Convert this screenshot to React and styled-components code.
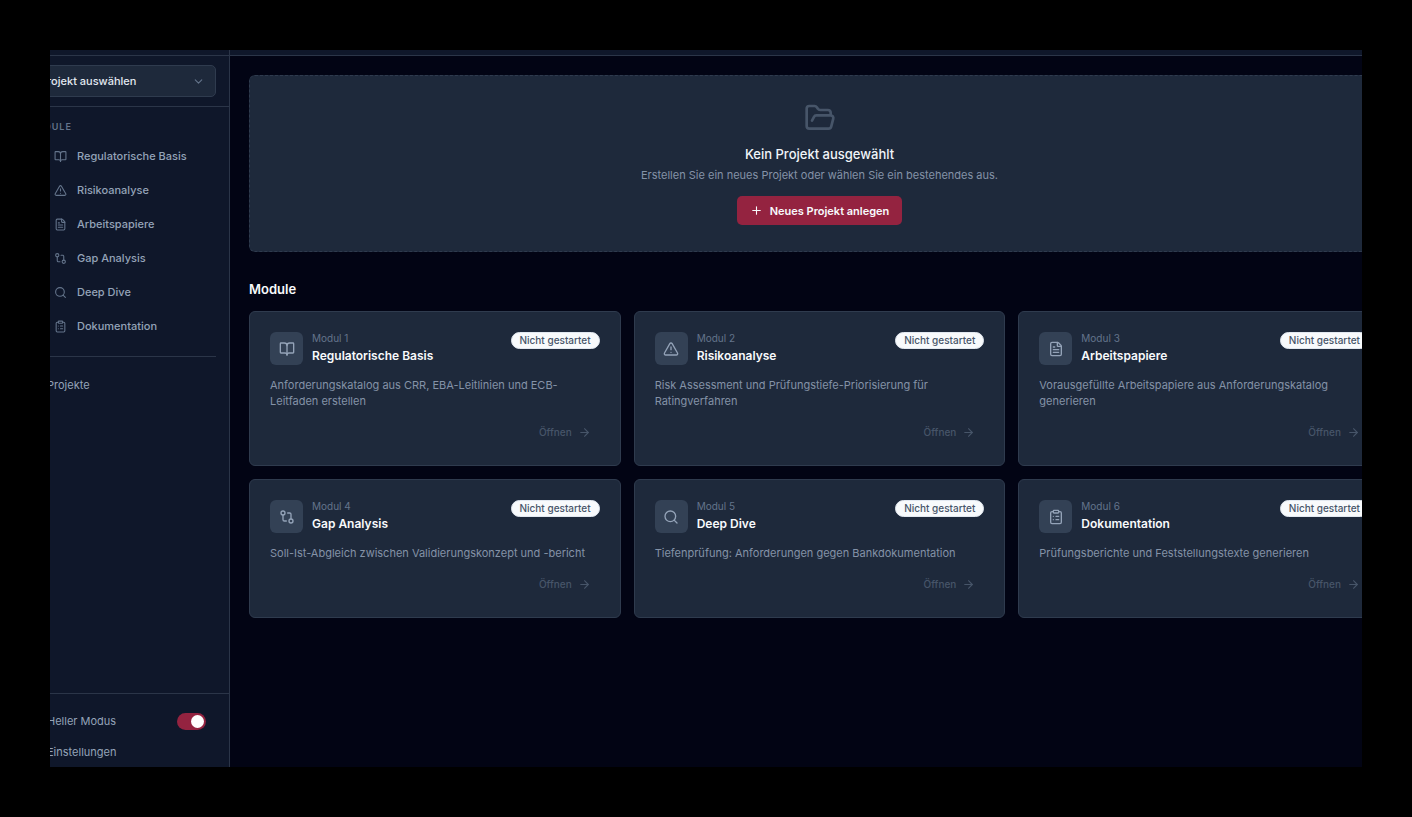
import React, { useState } from 'react';
import styled, { createGlobalStyle } from 'styled-components';
import {
  ArrowRight,
  BookOpen,
  ChevronDown,
  ClipboardList,
  FileText,
  FolderOpen,
  GitCompare,
  Plus,
  Search,
  Settings,
  Sun,
  Folder,
  TriangleAlert,
} from 'lucide-react';

const GlobalStyle = createGlobalStyle`
  * {
    box-sizing: border-box;
  }

  body {
    margin: 0;
    background: #000;
    color: #f8fafc;
    font-family: Inter, "Liberation Sans", sans-serif;
    font-size: 11px;
    line-height: 16px;
  }

  h1, h2, h3, p, ul {
    margin: 0;
    padding: 0;
  }

  button, select {
    font: inherit;
  }
`;

const Stage = styled.div`
  height: 100vh;
  padding: 50px;
`;

const Viewport = styled.div`
  height: 100%;
  overflow: hidden;
  background: #020414;
`;

const Shell = styled.div`
  display: flex;
  height: 100%;
  margin: 0 -48px 0 -36px;
`;

const Sidebar = styled.aside`
  display: flex;
  flex-direction: column;
  flex: none;
  width: 216px;
  background: #0f172a;
  border-right: 1px solid #2b3548;
`;

const TopStrip = styled.div`
  flex: none;
  height: 6px;
  background: #0f172a;
  border-bottom: 1px solid #2b3548;
`;

const Picker = styled.div`
  display: grid;
  align-items: center;
  padding: 9px 13px;
  border-bottom: 1px solid #2b3548;

  > * {
    grid-area: 1 / 1;
  }

  svg {
    justify-self: end;
    margin-right: 11px;
    color: #64748b;
    pointer-events: none;
  }
`;

const ProjectSelect = styled.select`
  appearance: none;
  width: 100%;
  height: 32px;
  padding: 0 12px;
  border: 1px solid #2f3b4e;
  border-radius: 5px;
  background: #1e293b;
  color: #e2e8f0;
  font-size: 11px;
  font-weight: 500;
`;

const Nav = styled.nav`
  flex: 1;
  padding: 12px 13px;
`;

const NavHeading = styled.h2`
  padding: 0 0 4px;
  color: #64748b;
  font-size: 9px;
  font-weight: 600;
  letter-spacing: 1px;
  text-transform: uppercase;
`;

const NavList = styled.ul`
  list-style: none;
`;

const NavLink = styled.a`
  display: flex;
  align-items: center;
  gap: 10px;
  height: 34px;
  padding-left: 27px;
  color: #94a3b8;
  font-weight: 500;
  text-decoration: none;

  svg {
    color: #64748b;
  }
`;

const Divider = styled.hr`
  height: 1px;
  margin: 13px 0;
  border: 0;
  background: #2b3548;
`;

const SideFooter = styled.div`
  display: grid;
  gap: 1px;
  padding: 12px 13px 0;
  border-top: 1px solid #2b3548;
`;

const FooterRow = styled.div`
  display: flex;
  align-items: center;
  gap: 7px;
  height: 30px;
  padding-right: 10px;
  color: #94a3b8;

  label {
    flex: 1;
  }
`;

const FooterLink = styled.a`
  display: flex;
  align-items: center;
  gap: 7px;
  color: inherit;
  text-decoration: none;
`;

const Switch = styled.input`
  appearance: none;
  display: flex;
  align-items: center;
  width: 29px;
  height: 17px;
  margin: 0;
  padding: 2px;
  border-radius: 9px;
  background: ${props => (props.checked ? '#942340' : '#334155')};

  &::before {
    content: '';
    width: 13px;
    height: 13px;
    margin-left: ${props => (props.checked ? 'auto' : 0)};
    border-radius: 50%;
    background: #fff;
  }
`;

const Main = styled.div`
  flex: 1;
  min-width: 0;
`;

const Content = styled.main`
  padding: 19px 20px 19px 19px;
`;

const Empty = styled.section`
  display: flex;
  flex-direction: column;
  align-items: center;
  padding: 26px 20px;
  border: 1px dashed #2f3b4e;
  border-radius: 6px;
  background: #1e293b;
  text-align: center;

  > svg {
    color: #475569;
  }
`;

const EmptyTitle = styled.h1`
  margin-top: 10px;
  color: #f1f5f9;
  font-size: 13px;
  font-weight: 500;
  line-height: 20px;
`;

const EmptyText = styled.p`
  margin: 3px 0 13px;
  color: #8492a7;
`;

const Primary = styled.button`
  display: flex;
  align-items: center;
  gap: 7px;
  height: 29px;
  padding: 0 13px;
  border: 0;
  border-radius: 5px;
  background: #942340;
  color: #f8fafc;
  font-weight: 600;
`;

const SectionTitle = styled.h2`
  margin: 27px 0 12px;
  font-size: 13px;
  font-weight: 600;
  line-height: 20px;
`;

const Grid = styled.div`
  display: grid;
  grid-template-columns: repeat(3, 1fr);
  gap: 13px;
`;

const Card = styled.article`
  padding: 20px;
  border: 1px solid #2f3b4e;
  border-radius: 6px;
  background: #1e293b;
`;

const CardHead = styled.div`
  display: flex;
  align-items: flex-start;
  gap: 9px;
  height: 33px;
`;

const IconBox = styled.div`
  display: grid;
  place-items: center;
  width: 33px;
  height: 33px;
  border-radius: 6px;
  background: #334155;
  color: #94a3b8;
`;

const CardNames = styled.div`
  flex: 1;
`;

const CardNumber = styled.p`
  color: #64748b;
  font-size: 10px;
  line-height: 13px;
`;

const CardTitle = styled.h3`
  font-size: 12px;
  font-weight: 600;
  line-height: 22px;
`;

const Badge = styled.span`
  padding: 0 8px;
  border: 1px solid #e2e8f0;
  border-radius: 9px;
  background: #f8fafc;
  color: #475569;
  font-size: 10px;
  font-weight: 500;
  line-height: 15px;
`;

const CardText = styled.p`
  margin: 12px 0 10px;
  color: #8492a7;
`;

const OpenButton = styled.button`
  display: flex;
  align-items: center;
  gap: 6px;
  height: 26px;
  margin-left: auto;
  padding: 0 9px;
  border: 0;
  background: none;
  color: #475569;
  font-size: 10px;
  font-weight: 500;
`;

const modules = [
  {
    title: 'Regulatorische Basis',
    text: 'Anforderungskatalog aus CRR, EBA-Leitlinien und ECB-Leitfaden erstellen',
    icon: BookOpen,
  },
  {
    title: 'Risikoanalyse',
    text: 'Risk Assessment und Prüfungstiefe-Priorisierung für Ratingverfahren',
    icon: TriangleAlert,
  },
  {
    title: 'Arbeitspapiere',
    text: 'Vorausgefüllte Arbeitspapiere aus Anforderungskatalog generieren',
    icon: FileText,
  },
  {
    title: 'Gap Analysis',
    text: 'Soll-Ist-Abgleich zwischen Validierungskonzept und -bericht',
    icon: GitCompare,
  },
  {
    title: 'Deep Dive',
    text: 'Tiefenprüfung: Anforderungen gegen Bankdokumentation',
    icon: Search,
  },
  {
    title: 'Dokumentation',
    text: 'Prüfungsberichte und Feststellungstexte generieren',
    icon: ClipboardList,
  },
];

const ModuleCard = ({ number, title, text, icon: Icon }) => (
  <Card>
    <CardHead>
      <IconBox><Icon size={16} /></IconBox>
      <CardNames>
        <CardNumber>Modul {number}</CardNumber>
        <CardTitle>{title}</CardTitle>
      </CardNames>
      <Badge>Nicht gestartet</Badge>
    </CardHead>
    <CardText>{text}</CardText>
    <OpenButton type="button" disabled>
      Öffnen
      <ArrowRight size={13} />
    </OpenButton>
  </Card>
);

export default function App() {
  const [light, setLight] = useState(true);

  return (
    <Stage>
      <GlobalStyle />
      <Viewport>
        <Shell>
          <Sidebar>
            <TopStrip />
            <Picker>
              <ProjectSelect aria-label="Projekt auswählen">
                <option>Projekt auswählen</option>
              </ProjectSelect>
              <ChevronDown size={13} />
            </Picker>
            <Nav>
              <NavHeading>Module</NavHeading>
              <NavList>
                {modules.map(({ title, icon: Icon }) => (
                  <li key={title}>
                    <NavLink href="#">
                      <Icon size={13} />
                      {title}
                    </NavLink>
                  </li>
                ))}
              </NavList>
              <Divider />
              <FooterRow>
                <FooterLink href="#">
                  <Folder size={13} />
                  Projekte
                </FooterLink>
              </FooterRow>
            </Nav>
            <SideFooter>
              <FooterRow>
                <Sun size={13} />
                <label htmlFor="light-mode">Heller Modus</label>
                <Switch
                  id="light-mode"
                  type="checkbox"
                  checked={light}
                  onChange={() => setLight(!light)}
                />
              </FooterRow>
              <FooterRow>
                <FooterLink href="#">
                  <Settings size={13} />
                  Einstellungen
                </FooterLink>
              </FooterRow>
            </SideFooter>
          </Sidebar>
          <Main>
            <TopStrip />
            <Content>
              <Empty>
                <FolderOpen size={32} />
                <EmptyTitle>Kein Projekt ausgewählt</EmptyTitle>
                <EmptyText>
                  Erstellen Sie ein neues Projekt oder wählen Sie ein bestehendes aus.
                </EmptyText>
                <Primary type="button">
                  <Plus size={13} />
                  Neues Projekt anlegen
                </Primary>
              </Empty>
              <SectionTitle>Module</SectionTitle>
              <Grid>
                {modules.map((item, index) => (
                  <ModuleCard key={item.title} number={index + 1} {...item} />
                ))}
              </Grid>
            </Content>
          </Main>
        </Shell>
      </Viewport>
    </Stage>
  );
}
